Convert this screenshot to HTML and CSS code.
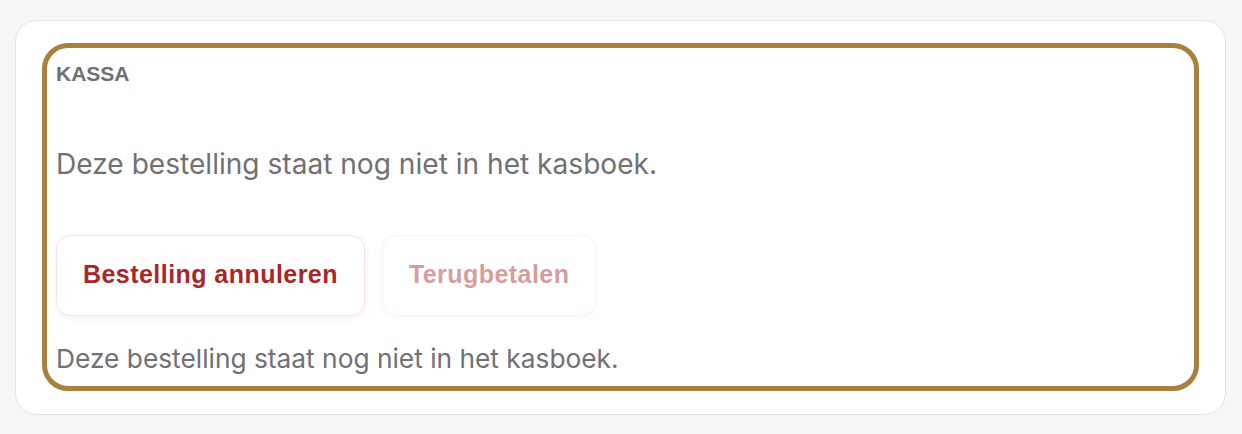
FILE: index.html
```html
<!DOCTYPE html>
<html lang="nl">
<head>
<meta charset="utf-8">
<title>Kassa</title>
<link rel="stylesheet" href="styles.css">
</head>
<body>
<div class="card">
  <section class="kassa">
    <h2 class="kassa-title">KASSA</h2>
    <p class="kassa-status">Deze bestelling staat nog niet in het kasboek.</p>
    <div class="kassa-actions">
      <button class="btn btn-danger" type="button">Bestelling annuleren</button>
      <button class="btn btn-danger btn-disabled" type="button" disabled>Terugbetalen</button>
    </div>
    <p class="kassa-note">Deze bestelling staat nog niet in het kasboek.</p>
  </section>
</div>
</body>
</html>
```

FILE: styles.css
```css
html, body {
  margin: 0;
  padding: 0;
}
body {
  background: #f6f6f6;
  padding: 20px 16px 0 15px;
  font-family: Inter, "Noto Sans", sans-serif;
}
.card {
  background: #ffffff;
  border: 1px solid #e4e4e4;
  border-radius: 22px;
  padding: 22px 26px 23px 26px;
  box-sizing: border-box;
  height: 395px;
}
.kassa {
  border: 5px solid #a98040;
  border-radius: 26px;
  height: 348px;
  box-sizing: border-box;
  padding: 14px 9px 0 9px;
  display: flex;
  flex-direction: column;
}
.kassa-title {
  margin: 0;
  font-family: "Liberation Sans", Arial, sans-serif;
  font-weight: 700;
  font-size: 21px;
  line-height: 24px;
  color: #6f6f73;
}
.kassa-status {
  margin: 61px 0 0 0;
  font-size: 28.1px;
  line-height: 34px;
  color: #707075;
}
.kassa-actions {
  display: flex;
  gap: 17px;
  margin-top: 54px;
}
.btn {
  font-family: "Liberation Sans", Arial, sans-serif;
  font-weight: 700;
  font-size: 25px;
  letter-spacing: 0.45px;
  line-height: 29px;
  padding: 24px 26px 26px 26px;
  background: #ffffff;
  border: 1px solid #f7e1e3;
  border-radius: 14px;
  box-shadow: 0 2px 6px rgba(168, 40, 42, 0.07);
  cursor: pointer;
}
.btn-danger {
  color: #a8282a;
}
.btn-disabled {
  opacity: 0.45;
  cursor: default;
}
.kassa-note {
  margin: 27px 0 0 0;
  font-size: 26.3px;
  line-height: 32px;
  color: #707075;
}
```
